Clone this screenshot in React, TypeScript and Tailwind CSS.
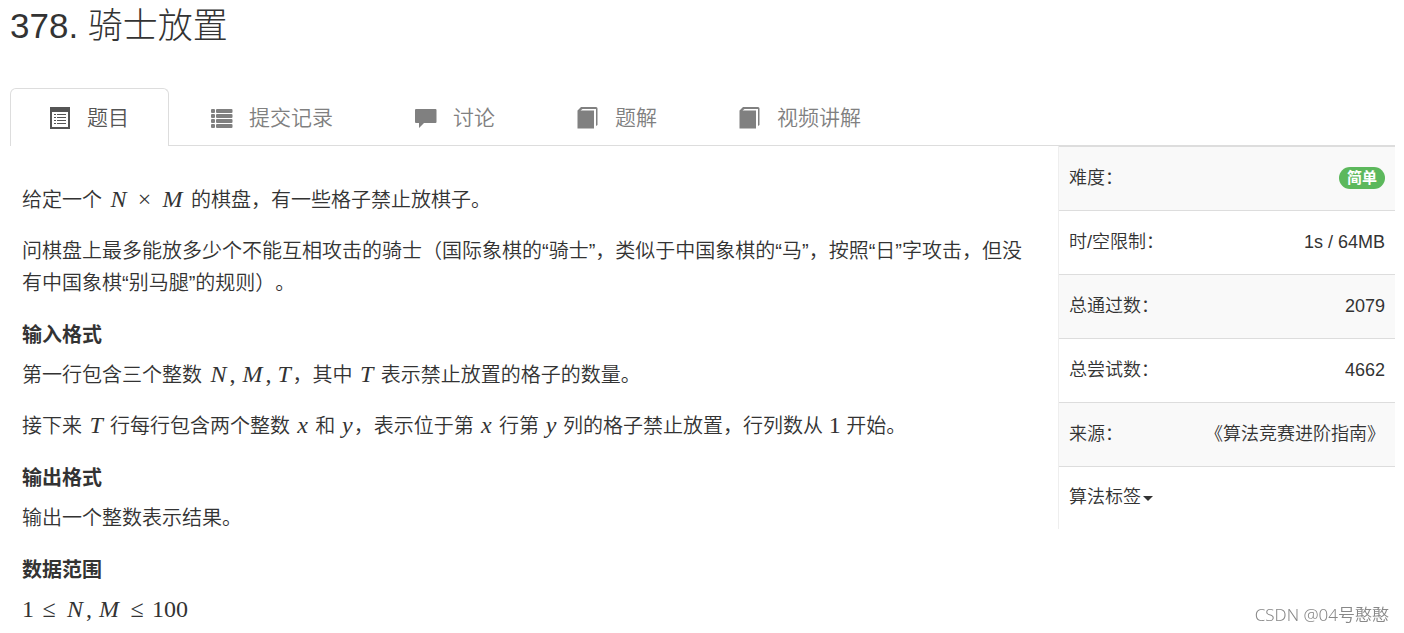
import type { ReactNode } from "react";

interface Tab {
  label: string;
  icon: ReactNode;
}

const ListAltIcon = () => (
  <svg className="size-[22px] shrink-0" viewBox="0 0 22 22" fill="currentColor" shapeRendering="crispEdges" aria-hidden="true">
    <path fillRule="evenodd" d="M1 0h20v22H1zM3 5v15h16V5z" />
    <path d="M5 7h2v1H5zM5 10h2v1H5zM5 13h2v1H5zM5 16h2v1H5zM8 7h9v1H8zM8 10h9v1H8zM8 13h9v1H8zM8 16h9v1H8z" />
  </svg>
);

const ListIcon = () => (
  <svg className="size-[22px] shrink-0" viewBox="0 0 22 22" fill="currentColor" aria-hidden="true">
    {[2, 7, 12, 17].map((y) => (
      <g key={y}>
        <rect x="0" y={y} width="4" height="4" rx="1" />
        <rect x="5" y={y} width="16.500" height="4" rx="1" />
      </g>
    ))}
  </svg>
);

const CommentIcon = () => (
  <svg className="size-[22px] shrink-0" viewBox="0 0 22 22" fill="currentColor" aria-hidden="true">
    <path d="M1 2h19.500a1 1 0 0 1 1 1v12a1 1 0 0 1-1 1H9l-5 5v-5H1a1 1 0 0 1-1-1V3a1 1 0 0 1 1-1z" />
  </svg>
);

const BookIcon = () => (
  <svg className="size-[22px] shrink-0" viewBox="0 0 22 22" fill="currentColor" aria-hidden="true">
    <path d="M4 0h15a1.500 1.500 0 0 1 1.500 1.500V18L19 19V2H5.500L3.500 3.500H17V21.500H.500V3.500z" />
  </svg>
);

const tabs: Tab[] = [
  { label: "题目", icon: <ListAltIcon /> },
  { label: "提交记录", icon: <ListIcon /> },
  { label: "讨论", icon: <CommentIcon /> },
  { label: "题解", icon: <BookIcon /> },
  { label: "视频讲解", icon: <BookIcon /> },
];

const stats = [
  { label: "难度：", value: <span className="ml-auto block w-fit rounded-full bg-[#5cb85c] px-2 text-[15px] leading-[22px] font-bold text-white">简单</span> },
  { label: "时/空限制：", value: "1s / 64MB" },
  { label: "总通过数：", value: "2079" },
  { label: "总尝试数：", value: "4662" },
  { label: "来源：", value: "《算法竞赛进阶指南》" },
];

// widths of the math italic letters
const letterWidth: Record<string, string> = {
  N: "w-[22px]",
  M: "w-[26px]",
  T: "w-[17px]",
  x: "w-[14px]",
  y: "w-[13px]",
};

const V = ({ children }: { children: string }) => (
  <i className={`inline-block text-center ${letterWidth[children]}`}>{children}</i>
);

const Op = ({ children }: { children: string }) => (
  <span className="inline-block w-[30px] text-center">{children}</span>
);

const Comma = () => <span className="inline-block w-[10px]">,</span>;

const Tex = ({ children }: { children: ReactNode }) => (
  <span className="font-['Liberation_Serif',serif] text-2xl leading-none font-normal">{children}</span>
);

const Heading = ({ children }: { children: string }) => (
  <h4 className="mt-5 mb-2 font-bold">{children}</h4>
);

const App = () => {
  return (
    <div lang="zh-CN" className="pr-[9px] pb-2 pl-2.5 font-['Liberation_Sans','Noto_Sans_CJK_SC',sans-serif] font-[350] text-[#333] [text-spacing-trim:space-all]">
      <h1 className="pt-1 text-[35px] leading-[44px] font-light">378. 骑士放置</h1>

      <nav className="mt-10 flex gap-[3px] border-b border-[#ddd] text-[21px]">
        {tabs.map((tab, i) => (
          <a
            key={tab.label}
            href="#"
            className={`-mb-px flex h-[58px] items-center gap-4 rounded-t-md border border-b-0 pr-[39px] pl-[38px] ${
              i === 0 ? "border-[#ddd] bg-white text-[#555]" : "border-transparent text-[#808080]"
            }`}
          >
            {tab.icon}
            <span>{tab.label}</span>
          </a>
        ))}
      </nav>

      <div className="flex items-start">
        <main className="min-w-0 flex-1 pt-[38px] pr-[30px] pl-3 text-xl leading-8">
          <p className="mb-[19px]">
            给定一个 <Tex><V>N</V><Op>×</Op><V>M</V></Tex> 的棋盘，有一些格子禁止放棋子。
          </p>
          <p className="mb-[19px]">
            问棋盘上最多能放多少个不能互相攻击的骑士（国际象棋的“骑士”，类似于中国象棋的“马”，按照“日”字攻击，但没有中国象棋“别马腿”的规则）。
          </p>

          <Heading>输入格式</Heading>
          <p className="mb-[19px]">
            第一行包含三个整数 <Tex><V>N</V><Comma /><V>M</V><Comma /><V>T</V></Tex>，其中 <Tex><V>T</V></Tex> 表示禁止放置的格子的数量。
          </p>
          <p className="mb-[19px]">
            接下来 <Tex><V>T</V></Tex> 行每行包含两个整数 <Tex><V>x</V></Tex> 和 <Tex><V>y</V></Tex>，表示位于第 <Tex><V>x</V></Tex> 行第 <Tex><V>y</V></Tex> 列的格子禁止放置，行列数从 <Tex>1</Tex> 开始。
          </p>

          <Heading>输出格式</Heading>
          <p className="mb-[18px]">输出一个整数表示结果。</p>

          <Heading>数据范围</Heading>
          <p>
            <Tex>1<Op>≤</Op><V>N</V><Comma /><V>M</V><Op>≤</Op>100</Tex>
          </p>
        </main>

        <aside className="w-[337px] shrink-0 border-l border-[#eee]">
          <table className="w-full border-t border-[#ddd] text-lg">
            <tbody>
              {stats.map((row) => (
                <tr key={row.label} className="h-16 border-t border-[#ddd] odd:bg-[#f9f9f9]">
                  <th scope="row" className="pb-0.5 pl-2.5 text-left font-[350]">{row.label}</th>
                  <td className="pr-2.5 pb-0.5 text-right">{row.value}</td>
                </tr>
              ))}
              <tr className="h-[62px] border-t border-[#ddd]">
                <td colSpan={2} className="pb-0.5 pl-2.5">
                  <button className="flex items-center">
                    算法标签
                    <svg className="mt-1 ml-0.5 h-[5px] w-2.5" viewBox="0 0 10 5" fill="currentColor" aria-hidden="true">
                      <path d="M0 0h10L5 5z" />
                    </svg>
                  </button>
                </td>
              </tr>
            </tbody>
          </table>
        </aside>
      </div>

      <div className="fixed right-[15px] bottom-1.5 font-['Noto_Sans','Noto_Sans_CJK_SC',sans-serif] text-[17px] leading-6 text-[#888]">
        CSDN @04号憨憨
      </div>
    </div>
  );
};

export default App;
